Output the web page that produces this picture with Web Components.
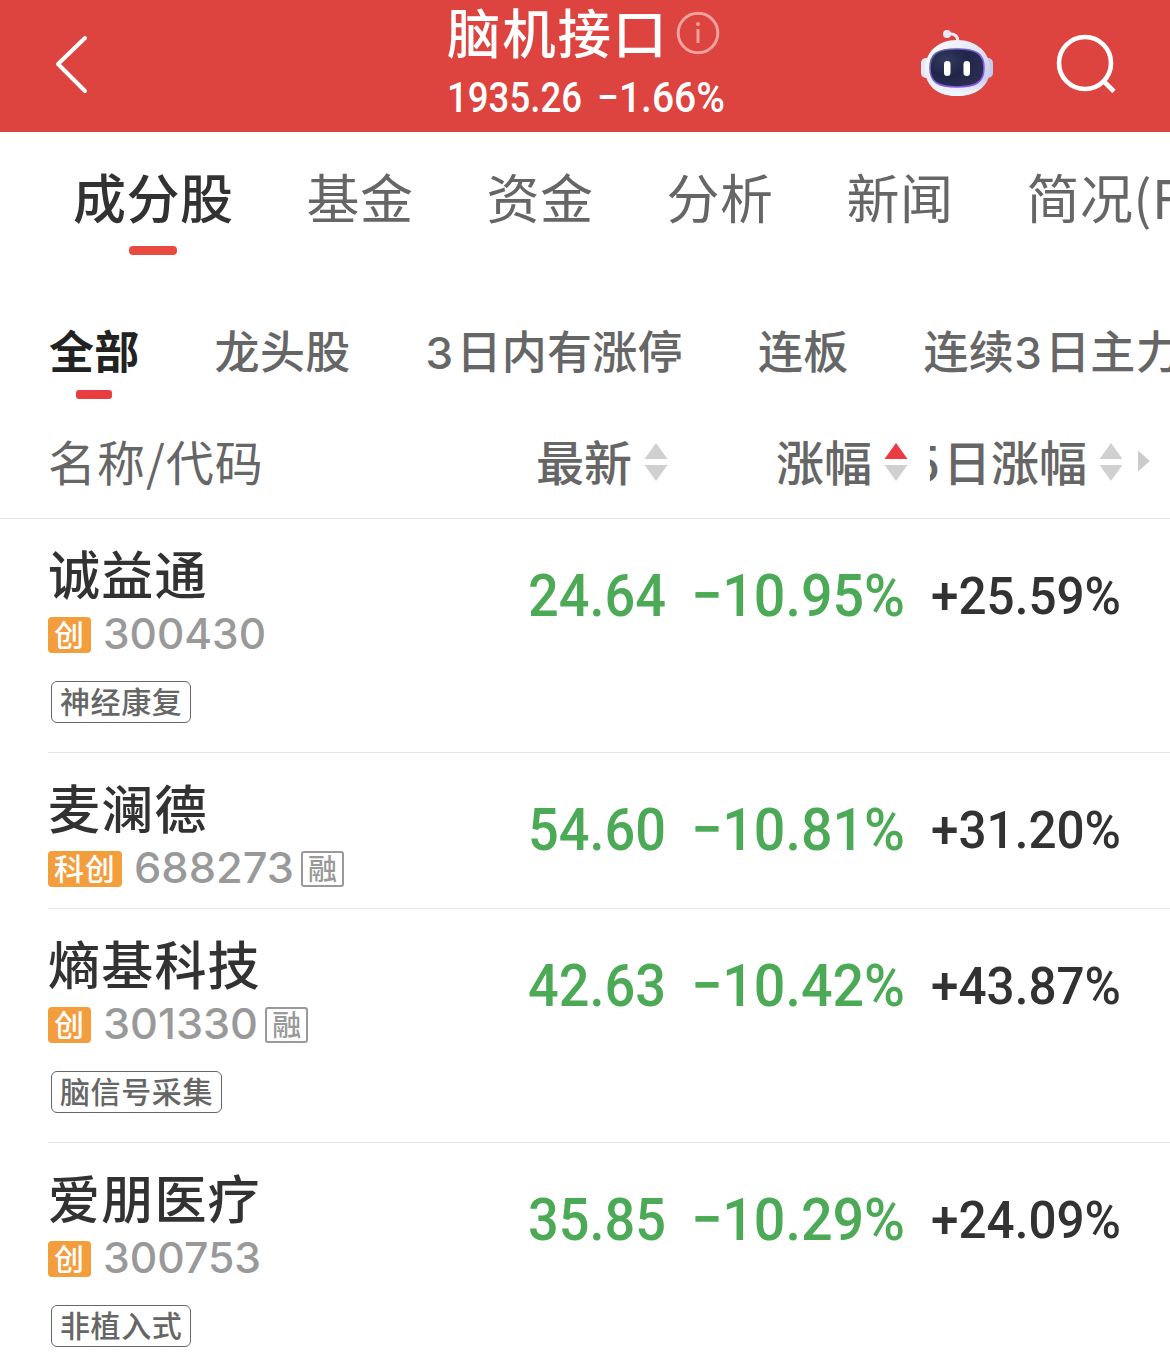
<!DOCTYPE html>
<html lang="zh-CN">
<head>
<meta charset="utf-8">
<title>脑机接口</title>
<style>
  body {
    margin: 0;
    width: 1170px;
    height: 1359px;
    overflow: hidden;
    background: #fff;
    color: #323232;
    font-family: "Noto Sans CJK SC", sans-serif;
  }
</style>
</head>
<body>
<stock-app></stock-app>

<script>
/**
 * attaches an open shadow root filled from the given markup
 */
function render(host, html) {
    const template = document.createElement('template');
    template.innerHTML = html;
    host.attachShadow({ mode: 'open' });
    host.shadowRoot.appendChild(template.content.cloneNode(true));
}

/**
 * text squeezed or stretched to the width given in px
 */
class FitText extends HTMLElement {
    constructor() {
        super();
        render(this, `
<style>
  :host {
    display: block;
    white-space: nowrap;
    flex: none;
  }

  span {
    display: inline-block;
    transform-origin: 0 50%;
  }
</style>
<span><slot></slot></span>
`);
    }

    connectedCallback() {
        const width = Number(this.getAttribute('width'));
        const span = this.shadowRoot.querySelector('span');
        this.style.width = width + 'px';
        const natural = span.getBoundingClientRect().width;
        span.style.transform = `scaleX(${width / natural})`;
    }
}

class StockHeader extends HTMLElement {
    constructor() {
        super();
        render(this, `
<style>
  :host {
    display: grid;
    grid-template-columns: 447px 1fr 250px;
    height: 132px;
    background: #dd433f;
    color: #fff;
  }

  .back {
    padding: 34px 0 0 54px;
  }

  .title {
    display: flex;
    height: 60px;
    line-height: 62px;
    font-size: 53.5px;
    font-weight: 500;
    letter-spacing: 1.8px;
  }

  .title svg {
    margin: 11px 0 0 8px;
  }

  .quote {
    display: flex;
    gap: 15px;
    height: 72px;
    line-height: 74px;
    font-family: Roboto, sans-serif;
    font-size: 43px;
    font-weight: 500;
  }

  .tools {
    display: flex;
    padding-top: 28px;
  }

  .tools svg + svg {
    margin: 5px 0 0 60px;
  }

  svg {
    display: block;
    flex: none;
  }
</style>
<div class="back">
  <svg width="36" height="62" viewBox="0 0 36 62" fill="none" stroke="#fff" stroke-width="4" stroke-linecap="round" stroke-linejoin="round">
    <path d="M31 4L4 30L31 57"/>
  </svg>
</div>
<div>
  <div class="title">
    <slot></slot>
    <svg width="44" height="44" viewBox="0 0 44 44" fill="none" stroke="#f4a29d" stroke-width="3">
      <circle cx="22" cy="22" r="19.8"/>
      <path d="M22 18V32"/>
      <circle cx="22" cy="13" r="2" fill="#f4a29d" stroke="none"/>
    </svg>
  </div>
  <div class="quote">
    <fit-text width="135">1935.26</fit-text>
    <fit-text width="128">−1.66%</fit-text>
  </div>
</div>
<div class="tools">
  <svg width="76" height="72" viewBox="0 0 76 72">
    <defs>
      <linearGradient id="shell" x1="0" y1="0" x2="1" y2="1">
        <stop offset="0" stop-color="#fff"/>
        <stop offset="0.5" stop-color="#e3e6f6"/>
        <stop offset="1" stop-color="#b9c0ee"/>
      </linearGradient>
      <linearGradient id="base" x1="0" y1="0" x2="0" y2="1">
        <stop offset="0.7" stop-color="#fff" stop-opacity="0"/>
        <stop offset="1" stop-color="#f3f9ff"/>
      </linearGradient>
      <linearGradient id="rim" x1="0" y1="0" x2="1" y2="1">
        <stop offset="0" stop-color="#5b5f92"/>
        <stop offset="0.5" stop-color="#7d5fe0"/>
        <stop offset="1" stop-color="#8f4fe8"/>
      </linearGradient>
      <radialGradient id="face" cx="0.3" cy="0.3" r="0.8">
        <stop offset="0" stop-color="#343a5e"/>
        <stop offset="0.5" stop-color="#20254a"/>
        <stop offset="1" stop-color="#2b3052"/>
      </radialGradient>
    </defs>
    <path d="M28 6C36 5 38 9 38 15" fill="none" stroke="#e8e9f7" stroke-width="3"/>
    <circle cx="27" cy="6" r="4" fill="#e8eaf8"/>
    <rect x="1" y="30" width="12" height="20" rx="5" fill="#e6e8f7"/>
    <rect x="61" y="30" width="12" height="20" rx="5" fill="#c5c9ec"/>
    <path d="M37 12C57 12 70 25 70 41C70 58 56 68 37 68C18 68 5 58 5 41C5 25 17 12 37 12Z" fill="url(#shell)"/>
    <path d="M37 12C57 12 70 25 70 41C70 58 56 68 37 68C18 68 5 58 5 41C5 25 17 12 37 12Z" fill="url(#base)"/>
    <path d="M37 21C57 21 64 26 64 40C64 54 56 59 37 59C18 59 10 54 10 40C10 26 17 21 37 21Z" fill="url(#face)" stroke="url(#rim)" stroke-width="1.6"/>
    <rect x="24" y="33" width="6.5" height="15" rx="3.2" fill="#fff"/>
    <rect x="43.5" y="33" width="6.5" height="15" rx="3.2" fill="#fff"/>
  </svg>
  <svg width="62" height="62" viewBox="0 0 62 62" fill="none" stroke="#fff" stroke-width="4.6">
    <circle cx="29" cy="30" r="26"/>
    <path d="M47.5 48L58 58.5"/>
  </svg>
</div>
`);
    }
}

class TabItem extends HTMLElement {
    constructor() {
        super();
        render(this, `
<style>
  :host {
    display: flex;
    flex-direction: column;
    align-items: center;
    flex: none;
    color: #666;
    white-space: nowrap;
  }

  .bar {
    display: none;
    width: var(--bar-width);
    height: 9px;
    margin-top: var(--bar-gap);
    border-radius: var(--bar-radius);
    background: var(--bar-color);
  }

  :host([active]) {
    color: var(--active-color);
    font-weight: var(--active-weight);
  }

  :host([active]) .bar {
    display: block;
  }
</style>
<div><slot></slot></div>
<div class="bar"></div>
`);
    }
}

class SortLabel extends HTMLElement {
    constructor() {
        super();
        render(this, `
<style>
  :host {
    display: flex;
    align-items: center;
    justify-content: flex-end;
    height: 60px;
    white-space: nowrap;
    font-weight: 500;
  }

  svg {
    display: block;
    flex: none;
    margin: 3px 0 0 12px;
    fill: #d0d0d0;
  }

  :host([up]) .up {
    fill: #ec3b40;
  }
</style>
<span><slot></slot></span>
<svg width="24" height="40" viewBox="0 0 24 40">
  <path class="up" d="M12 1L23.5 17H0.5Z"/>
  <path d="M12 39L23.5 23H0.5Z"/>
</svg>
`);
    }
}

class StockRow extends HTMLElement {
    constructor() {
        super();
        const get = name => this.getAttribute(name);
        render(this, `
<style>
  :host {
    display: grid;
    grid-template-columns: 480px 1fr;
    box-sizing: border-box;
    height: 156px;
    margin-left: 48px;
    border-bottom: 1.5px solid #e6e6e6;
  }

  :host([tag]) {
    height: 234px;
  }

  .name {
    height: 60px;
    margin-top: 24px;
    line-height: 60px;
    font-size: 52px;
    font-weight: 500;
    letter-spacing: 1.2px;
  }

  .code {
    display: flex;
    align-items: center;
    height: 36px;
    margin-top: 14px;
    color: #999;
    font: 500 42px/34px Inter, sans-serif;
  }

  .code fit-text {
    margin-top: -2px;
  }

  .board,
  .margin {
    box-sizing: border-box;
    height: 36px;
    border-radius: 4px;
    font: 500 30px/33px "Noto Sans CJK SC", sans-serif;
  }

  .board {
    margin-right: 12.5px;
    padding: 0 6px;
    background: #f29e3d;
    color: #fff;
    letter-spacing: 0.8px;
  }

  .margin {
    width: 43px;
    margin-left: 7px;
    border: 2px solid #999;
    border-radius: 3px;
    line-height: 29px;
    font-size: 29px;
    text-align: center;
  }

  .tag {
    display: inline-block;
    box-sizing: border-box;
    height: 42px;
    margin: 28px 0 0 3px;
    padding: 0 8px;
    border: 1.5px solid #666;
    border-radius: 6px;
    color: #666;
    font-size: 30px;
    font-weight: 500;
    line-height: 37px;
    letter-spacing: 0.6px;
  }

  .values {
    display: flex;
    height: 60px;
    margin-top: 47px;
    line-height: 60px;
    font-family: Roboto, sans-serif;
    font-size: 60px;
    font-weight: 500;
  }

  .fall {
    color: #4caa56;
  }

  .change {
    margin-left: 25px;
  }

  .five {
    margin-left: 26px;
    line-height: 62px;
    font-size: 51.5px;
  }
</style>
<div>
  <div class="name"><slot></slot></div>
  <div class="code">
    <span class="board">${get('board')}</span>
    <fit-text width="${get('code-width')}">${get('code')}</fit-text>
    ${this.hasAttribute('margin') ? '<span class="margin">融</span>' : ''}
  </div>
  ${this.hasAttribute('tag') ? `<span class="tag">${get('tag')}</span>` : ''}
</div>
<div class="values">
  <fit-text class="fall" width="138">${get('price')}</fit-text>
  <fit-text class="fall change" width="214">${get('change')}</fit-text>
  <fit-text class="five" width="190">${get('five')}</fit-text>
</div>
`);
    }
}

class StockApp extends HTMLElement {
    constructor() {
        super();
        render(this, `
<style>
  :host {
    display: block;
  }

  .tabs,
  .filters {
    display: flex;
    overflow: hidden;
  }

  .tabs {
    --bar-width: 48px;
    --bar-gap: 20px;
    --bar-radius: 4px;
    --bar-color: #e84a40;
    --active-color: #323232;
    --active-weight: 500;
    gap: 73px;
    height: 178px;
    padding: 34px 0 0 73px;
    box-sizing: border-box;
    line-height: 60px;
    font-size: 53px;
    letter-spacing: 0.5px;
  }

  .filters {
    --bar-width: 36px;
    --bar-gap: 10px;
    --bar-radius: 3px;
    --bar-color: #e93d41;
    --active-color: #222;
    --active-weight: 700;
    gap: 75px;
    height: 100px;
    padding: 10px 0 0 49px;
    box-sizing: border-box;
    line-height: 60px;
    font-size: 45px;
    font-weight: 500;
    letter-spacing: 0.3px;
  }

  .digit {
    margin: 0 3px 0 0;
    font-family: Inter, sans-serif;
    font-size: 44px;
    line-height: 1;
  }

  .cut {
    margin-right: 3px;
  }

  .head {
    display: grid;
    grid-template-columns: 620px 240px 1fr;
    box-sizing: border-box;
    height: 109px;
    padding: 20px 0 0 48px;
    border-bottom: 1.5px solid #e6e6e6;
    line-height: 60px;
    font-size: 48px;
    color: #666;
  }

  .first {
    display: flex;
    justify-content: space-between;
  }

  .label {
    letter-spacing: 1px;
  }

  .last {
    display: flex;
    align-items: center;
    justify-content: flex-end;
    height: 60px;
    overflow: hidden;
    margin-left: 22px;
    padding-right: 19px;
  }

  .more {
    flex: none;
    margin: 2px 0 0 14px;
  }
</style>
<stock-header>脑机接口</stock-header>
<div class="tabs">
  <tab-item active>成分股</tab-item>
  <tab-item>基金</tab-item>
  <tab-item>资金</tab-item>
  <tab-item>分析</tab-item>
  <tab-item>新闻</tab-item>
  <tab-item>简况(F10)</tab-item>
</div>
<div class="filters">
  <tab-item active>全部</tab-item>
  <tab-item>龙头股</tab-item>
  <tab-item><span class="digit">3</span>日内有涨停</tab-item>
  <tab-item>连板</tab-item>
  <tab-item>连续<span class="digit">3</span>日主力</tab-item>
</div>
<div class="head">
  <div class="first"><span class="label">名称/代码</span><sort-label>最新</sort-label></div>
  <sort-label up>涨幅</sort-label>
  <div class="last">
    <sort-label><span class="cut">5</span>日涨幅</sort-label>
    <svg class="more" width="14" height="22" viewBox="0 0 14 22"><path d="M1 0.5L13 11L1 21.5Z" fill="#ccc"/></svg>
  </div>
</div>
<stock-row board="创" code="300430" code-width="163" tag="神经康复" price="24.64" change="−10.95%" five="+25.59%">诚益通</stock-row>
<stock-row board="科创" code="688273" code-width="160" margin price="54.60" change="−10.81%" five="+31.20%">麦澜德</stock-row>
<stock-row board="创" code="301330" code-width="155" margin tag="脑信号采集" price="42.63" change="−10.42%" five="+43.87%">熵基科技</stock-row>
<stock-row board="创" code="300753" code-width="158" tag="非植入式" price="35.85" change="−10.29%" five="+24.09%">爱朋医疗</stock-row>
`);
    }
}

window.customElements.define('fit-text', FitText);
window.customElements.define('stock-header', StockHeader);
window.customElements.define('tab-item', TabItem);
window.customElements.define('sort-label', SortLabel);
window.customElements.define('stock-row', StockRow);
window.customElements.define('stock-app', StockApp);
</script>
</body>
</html>
